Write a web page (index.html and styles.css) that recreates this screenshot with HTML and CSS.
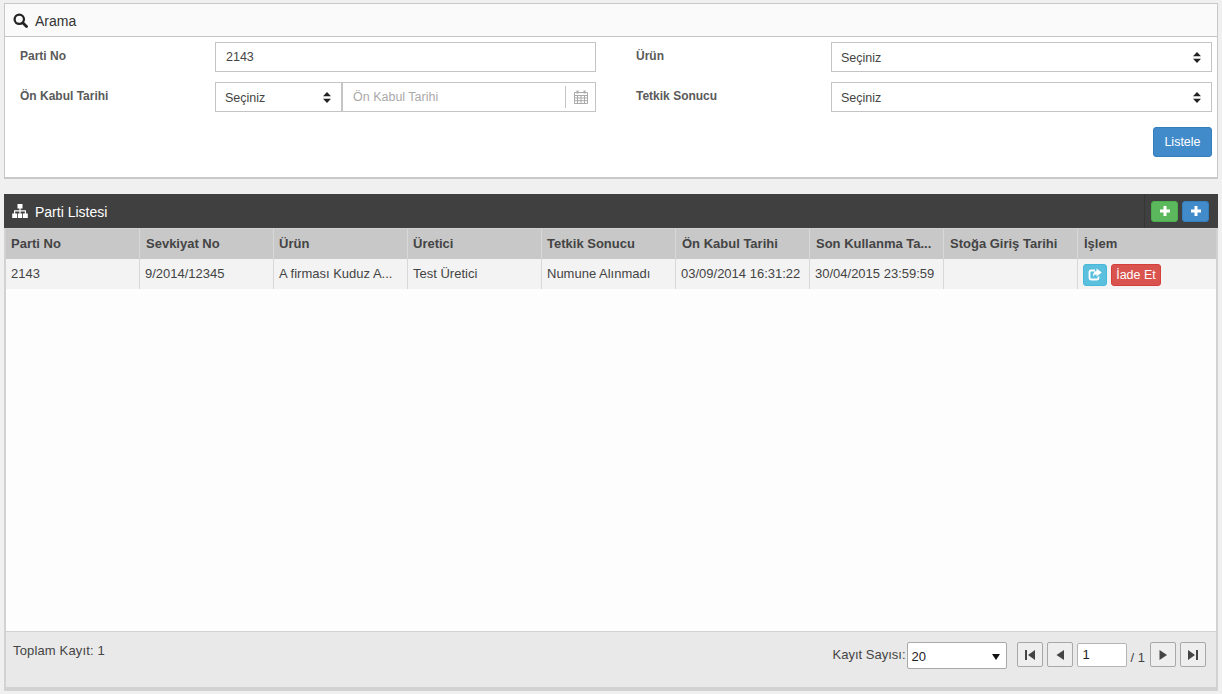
FILE: index.html
```html
<!DOCTYPE html>
<html lang="tr">
<head>
<meta charset="utf-8">
<title>Parti Listesi</title>
<link rel="stylesheet" href="styles.css">
</head>
<body>
<section class="panel search">
  <header class="search-head">
    <svg class="icon-search" viewBox="0 0 16 16" width="15" height="15"><circle cx="6.7" cy="6.7" r="5" fill="none" stroke="#222" stroke-width="2.4"/><path d="M10.4 10.4 14.4 14.4" stroke="#222" stroke-width="3" stroke-linecap="round"/></svg>
    <span>Arama</span>
  </header>
  <div class="search-body">
    <div class="form-grid">
      <label class="lbl">Parti No</label>
      <div class="ctl text-value">2143</div>
      <label class="lbl lbl2">Ürün</label>
      <div class="ctl select">Seçiniz<svg class="updown" viewBox="0 0 8 11" width="8" height="11"><path d="M4 0 8 4.300H0ZM0 6.700H8L4 11Z" fill="#222"/></svg></div>
      <label class="lbl">Ön Kabul Tarihi</label>
      <div class="date-group">
        <div class="ctl select date-select">Seçiniz<svg class="updown" viewBox="0 0 8 11" width="8" height="11"><path d="M4 0 8 4.300H0ZM0 6.700H8L4 11Z" fill="#222"/></svg></div>
        <div class="ctl date-input">
          <span class="placeholder">Ön Kabul Tarihi</span>
          <span class="cal-wrap">
            <svg viewBox="0 0 14 14" width="14" height="14"><path d="M0.500 2.500H13.500V13.500H0.500ZM0.500 5.500H13.500M0.500 8H13.500M0.500 10.700H13.500M3.500 5.500V13.500M7 5.500V13.500M10.500 5.500V13.500" fill="none" stroke="#aaa"/><path d="M3.500 0.500V3.500M10.500 0.500V3.500" stroke="#aaa" stroke-width="2"/></svg>
          </span>
        </div>
      </div>
      <label class="lbl lbl2">Tetkik Sonucu</label>
      <div class="ctl select">Seçiniz<svg class="updown" viewBox="0 0 8 11" width="8" height="11"><path d="M4 0 8 4.300H0ZM0 6.700H8L4 11Z" fill="#222"/></svg></div>
    </div>
    <div class="actions"><button class="btn-list" type="button">Listele</button></div>
  </div>
</section>

<section class="list-panel">
  <header class="list-head">
    <svg class="icon-sitemap" viewBox="0 0 16 14" width="16" height="14"><path fill="#fff" d="M5.500 0H10.500V4.500H8.600V6.200H14V9.500H15.800V14H10.800V9.500H12.800V7.500H8.600V9.500H10V14H6V9.500H7.400V7.500H3.200V9.500H5.200V14H0.200V9.500H2V6.200H7.400V4.500H5.500Z"/></svg>
    <span class="list-title">Parti Listesi</span>
    <div class="head-btns">
      <button class="mini green" type="button"><svg viewBox="0 0 10 10" width="10" height="10"><path fill="#fff" d="M3.500 0H6.500V3.500H10V6.500H6.500V10H3.500V6.500H0V3.500H3.500Z"/></svg></button>
      <button class="mini blue" type="button"><svg viewBox="0 0 10 10" width="10" height="10"><path fill="#fff" d="M3.500 0H6.500V3.500H10V6.500H6.500V10H3.500V6.500H0V3.500H3.500Z"/></svg></button>
    </div>
  </header>
  <div class="list-body">
    <div class="grid">
      <div class="grid-row grid-hdr">
        <div class="cell">Parti No</div>
        <div class="cell pad6">Sevkiyat No</div>
        <div class="cell">Ürün</div>
        <div class="cell">Üretici</div>
        <div class="cell">Tetkik Sonucu</div>
        <div class="cell pad6">Ön Kabul Tarihi</div>
        <div class="cell pad6">Son Kullanma Ta...</div>
        <div class="cell pad6">Stoğa Giriş Tarihi</div>
        <div class="cell last pad6">İşlem</div>
      </div>
      <div class="grid-row grid-data">
        <div class="cell">2143</div>
        <div class="cell">9/2014/12345</div>
        <div class="cell">A firması Kuduz A...</div>
        <div class="cell">Test Üretici</div>
        <div class="cell">Numune Alınmadı</div>
        <div class="cell">03/09/2014 16:31:22</div>
        <div class="cell">30/04/2015 23:59:59</div>
        <div class="cell"></div>
        <div class="cell last ops">
          <button class="op-go" type="button"><svg viewBox="0 0 14 13" width="14" height="13"><path fill="none" stroke="#fff" stroke-width="1.800" d="M7 2.500H3Q1.500 2.500 1.500 4V10Q1.500 11.500 3 11.500H9Q10.500 11.500 10.500 10V8.500"/><path fill="#fff" d="M8.500 0.500 13.800 4.500 8.500 8.500V6.300Q6 6.300 5 8.800 4.800 3.600 8.500 3Z"/></svg></button>
          <button class="op-back" type="button">İade Et</button>
        </div>
      </div>
    </div>
    <footer class="pager-bar">
      <div class="total">Toplam Kayıt: 1</div>
      <div class="pager">
        <span class="size-lbl">Kayıt Sayısı:</span>
        <div class="size-sel">20<svg viewBox="0 0 8 6" width="8" height="6"><path d="M0 0H8L4 6Z" fill="#111"/></svg></div>
        <button class="pg first" type="button"><svg viewBox="0 0 12 12" width="12" height="12"><path fill="#444" d="M1 1H3V11H1ZM11 1V11L4 6Z"/></svg></button>
        <button class="pg" type="button"><svg viewBox="0 0 12 12" width="12" height="12"><path fill="#444" d="M10 1V11L2.500 6Z"/></svg></button>
        <div class="pg-input">1</div>
        <span class="pg-of">/ 1</span>
        <button class="pg" type="button"><svg viewBox="0 0 12 12" width="12" height="12"><path fill="#444" d="M2.500 1V11L10 6Z"/></svg></button>
        <button class="pg pg-end" type="button"><svg viewBox="0 0 12 12" width="12" height="12"><path fill="#444" d="M1 1V11L8 6ZM9 1H11V11H9Z"/></svg></button>
      </div>
    </footer>
  </div>
</section>
</body>
</html>
```

FILE: styles.css
```css
* { box-sizing: border-box; }
html, body { height: 100%; }
body {
  margin: 0;
  padding: 3px 4px 0 4px;
  width: 1222px;
  height: 694px;
  overflow: hidden;
  background: #f0f0f0;
  font-family: "Liberation Sans", Arial, sans-serif;
  font-size: 13px;
  color: #444;
}
button { font-family: inherit; cursor: pointer; padding: 0; }

/* search panel */
.panel.search {
  width: 1214px;
  height: 176px;
  background: #fff;
  border: 1px solid #c8c8c8;
  border-bottom-width: 2px;
}
.search-head {
  height: 33px;
  background: #fafafa;
  border-bottom: 1px solid #c4c4c4;
  display: flex;
  align-items: center;
  padding: 1px 0 0 8px;
  font-size: 14px;
  color: #333;
  gap: 7px;
}
.icon-search { display: block; }
.search-body { padding: 5px 5px 0 15px; }
.form-grid {
  display: grid;
  grid-template-columns: 195px 381px 235px 381px;
  grid-auto-rows: 30px;
  row-gap: 10px;
}
.lbl {
  font-weight: bold;
  font-size: 12px;
  color: #5a5a5a;
  padding-top: 7px;
  line-height: 14px;
}
.lbl2 { padding-left: 40px; }
.ctl {
  height: 30px;
  border: 1px solid #c4c4c4;
  background: #fff;
  color: #444;
  font-size: 12.5px;
  display: flex;
  align-items: center;
}
.text-value { padding-left: 10px; padding-bottom: 1px; }
.select {
  position: relative;
  padding-left: 9px;
  padding-top: 1px;
}
.updown { position: absolute; right: 10px; top: 9px; }
.date-group { display: flex; }
.date-select { width: 127px; flex: none; border-right-width: 1px; }
.date-input {
  flex: 1;
  border-left-width: 0;
  padding-left: 11px;
  justify-content: space-between;
  box-shadow: inset 1px 0 0 #c4c4c4;
}
.placeholder { color: #aaa; }
.cal-wrap {
  height: 22px;
  width: 30px;
  border-left: 1px solid #c4c4c4;
  display: flex;
  align-items: center;
  justify-content: center;
}
.actions { display: flex; justify-content: flex-end; margin-top: 15px; }
.btn-list {
  width: 59px;
  height: 30px;
  background: #428bca;
  border: 1px solid #357ebd;
  border-radius: 3px;
  color: #fff;
  font-size: 12.5px;
}

/* list panel */
.list-panel {
  width: 1214px;
  height: 497px;
  margin-top: 15px;
  display: flex;
  flex-direction: column;
}
.list-head {
  height: 34px;
  flex: none;
  background: #404040;
  color: #fff;
  display: flex;
  align-items: center;
  padding: 0 0 0 8px;
  font-size: 14px;
  gap: 7px;
}
.list-title { padding-top: 2px; }
.head-btns {
  margin-left: auto;
  height: 34px;
  display: flex;
  align-items: center;
  gap: 4px;
  padding: 0 9px 0 6px;
  border-left: 1px solid #363636;
}
.mini {
  width: 27px;
  height: 21px;
  border-radius: 3px;
  border: 1px solid;
  display: flex;
  align-items: center;
  justify-content: center;
}
.mini.green { background: #5cb85c; border-color: #4cae4c; }
.mini.blue { background: #428bca; border-color: #357ebd; }
.list-body {
  flex: 1;
  display: flex;
  flex-direction: column;
  background: #fdfdfd;
  border: 2px solid #d2d2d2;
  border-top: 1px solid #d2d2d2;
  border-bottom-width: 4px;
  min-height: 0;
}
.grid { flex: 1; }
.grid-row {
  display: grid;
  grid-template-columns: 134px 134px 134px 134px 134px 134px 134px 134px 1fr;
  height: 30px;
}
.grid-hdr { background: #c8c8c8; font-weight: bold; font-size: 13px; color: #444; }
.grid-data { background: #f3f3f3; color: #444; font-size: 13px; }
.cell {
  display: flex;
  align-items: center;
  padding-left: 5px;
  border-right: 1px solid #d8d8d8;
  white-space: nowrap;
  overflow: hidden;
}
.grid-hdr .cell { padding-bottom: 2px; }
.grid-hdr .pad6 { padding-left: 6px; }
.grid-data .cell { padding-bottom: 1px; }
.cell.last { border-right: 0; }
.grid-data .ops { gap: 4px; padding: 1px 0 0 5px; }
.op-go {
  width: 24px;
  height: 22px;
  background: #5bc0de;
  border: 1px solid #46b8da;
  border-radius: 3px;
  display: flex;
  align-items: center;
  justify-content: center;
}
.op-back {
  width: 50px;
  height: 22px;
  background: #d9534f;
  border: 1px solid #d43f3a;
  border-radius: 3px;
  color: #fff;
  font-size: 12.5px;
}

/* footer */
.pager-bar {
  flex: none;
  height: 56px;
  background: #e9e9e9;
  border-top: 1px solid #d2d2d2;
  display: flex;
  justify-content: space-between;
  padding: 0 10px 0 7px;
}
.total { padding-top: 11px; line-height: 15px; color: #444; letter-spacing: 0.15px; }
.pager { display: flex; align-items: flex-start; padding-top: 10px; }
.size-lbl { margin-top: 6px; line-height: 14px; margin-right: 1px; }
.size-sel {
  width: 100px;
  height: 27px;
  background: #fff;
  border: 1px solid #a9a9a9;
  border-radius: 2px;
  display: flex;
  align-items: center;
  justify-content: space-between;
  padding: 2px 6px 0 4px;
  color: #222;
}
.pg {
  width: 26px;
  height: 25px;
  margin-right: 4px;
  background: #eee;
  border: 1px solid #a8a8a8;
  border-radius: 2px;
  display: flex;
  align-items: center;
  justify-content: center;
}
.pg.first { margin-left: 10px; }
.pg.pg-end { margin-right: 0; }
.pg-input {
  width: 50px;
  height: 24px;
  margin-top: 1px;
  background: #fff;
  border: 1px solid #b5b5b5;
  border-radius: 2px;
  padding: 3px 0 0 5px;
  line-height: 16px;
  color: #222;
}
.pg-of { margin: 9px 5px 0 4px; line-height: 14px; }
```
